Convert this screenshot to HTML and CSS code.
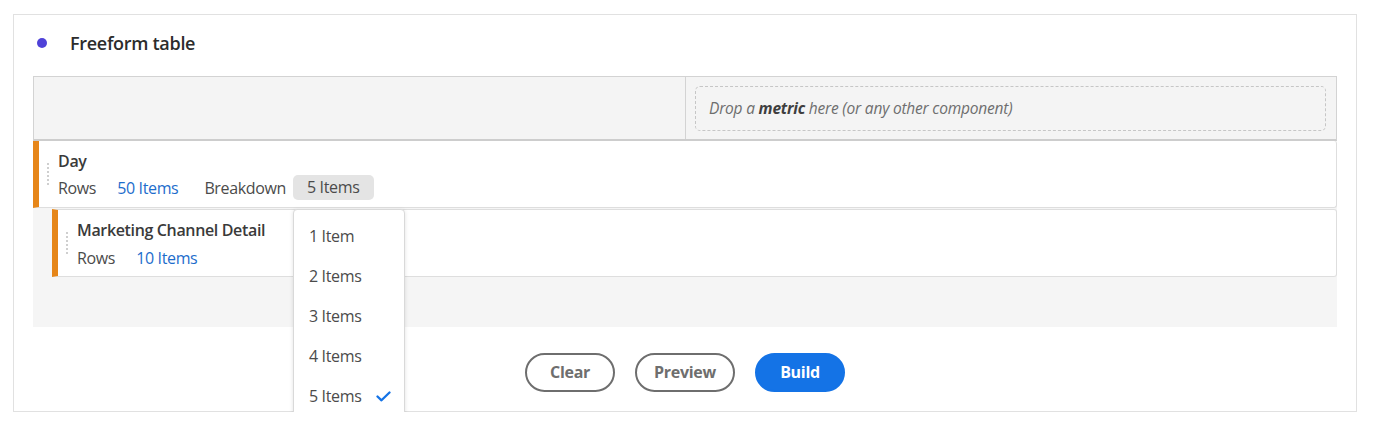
FILE: index.html
```html
<!DOCTYPE html>
<html lang="en">
<head>
<meta charset="utf-8">
<title>Freeform table</title>
<link rel="stylesheet" href="styles.css">
</head>
<body>
<div class="page">
  <section class="card">
    <div class="title-row">
      <span class="dot"></span>
      <h2 class="title">Freeform table</h2>
    </div>

    <div class="table">
      <div class="head">
        <div class="head-cell"></div>
        <div class="head-cell head-drop">
          <div class="dropzone">Drop a <b>metric</b> here (or any other component)</div>
        </div>
      </div>

      <div class="rows">
        <div class="row">
          <span class="grip"></span>
          <div class="row-body">
            <div class="row-name">Day</div>
            <div class="row-meta">
              <span class="lbl">Rows</span>
              <span class="link">50 Items</span>
              <span class="lbl lbl-bd">Breakdown</span>
              <span class="picker">
                <span class="pill">5 Items</span>
                <ul class="menu">
                  <li class="menu-item">1 Item</li>
                  <li class="menu-item">2 Items</li>
                  <li class="menu-item">3 Items</li>
                  <li class="menu-item">4 Items</li>
                  <li class="menu-item selected">5 Items
                    <svg class="check" width="15" height="11" viewBox="0 0 15 11"><path d="M1.5 5.5 L5.5 9.3 L13.5 1.5" fill="none" stroke="#1473e6" stroke-width="2.3" stroke-linecap="round" stroke-linejoin="round"/></svg>
                  </li>
                </ul>
              </span>
            </div>
          </div>
        </div>

        <div class="row row-sub">
          <span class="grip"></span>
          <div class="row-body">
            <div class="row-name">Marketing Channel Detail</div>
            <div class="row-meta">
              <span class="lbl">Rows</span>
              <span class="link">10 Items</span>
            </div>
          </div>
        </div>
      </div>
    </div>

    <div class="actions">
      <button class="btn btn-outline btn-clear">Clear</button>
      <button class="btn btn-outline btn-preview">Preview</button>
      <button class="btn btn-primary">Build</button>
    </div>
  </section>
</div>
</body>
</html>
```

FILE: styles.css
```css
* { box-sizing: border-box; }

html, body {
  margin: 0;
  padding: 0;
  background: #ffffff;
}

body {
  font-family: "Open Sans", "Noto Sans", sans-serif;
  font-size: 16px;
  letter-spacing: -0.35px;
  color: #4b4b4b;
}

.page {
  padding: 14px 0 0 13px;
}

.card {
  width: 1344px;
  border: 1px solid #e1e1e1;
  padding: 14px 19px 19px 19px;
  background: #fff;
}

.title-row {
  display: flex;
  align-items: center;
  height: 28px;
  margin-bottom: 19px;
  padding-left: 4px;
}

.dot {
  width: 10px;
  height: 10px;
  border-radius: 50%;
  background: #4f42d8;
  flex: none;
}

.title {
  margin: 0 0 0 23px;
  font-size: 18px;
  font-weight: 600;
  letter-spacing: -0.3px;
  color: #2c2c2c;
  line-height: 28px;
}

/* table */
.table {
  width: 1304px;
}

.head {
  display: grid;
  grid-template-columns: 1fr 1fr;
  background: #f4f4f4;
  border: 1px solid #d3d3d3;
  border-bottom: 2px solid #cdcdcd;
}

.head-cell {
  height: 62px;
}

.head-drop {
  border-left: 1px solid #d3d3d3;
  padding: 9px 10px 8px 9px;
}

.dropzone {
  height: 45px;
  border: 1px dashed #c6c6c6;
  border-radius: 5px;
  padding-left: 13px;
  padding-bottom: 1px;
  display: flex;
  align-items: center;
  font-style: italic;
  color: #6e6e6e;
  font-size: 15.5px;
  letter-spacing: -0.2px;
  white-space: pre;
}

.dropzone b {
  font-weight: 700;
  color: #3e3e3e;
}

.rows {
  background: #f5f5f5;
  padding-bottom: 50px;
}

.row {
  display: flex;
  background: #fff;
  border-left: 6px solid #e68619;
  border-right: 1px solid #dedede;
  border-bottom: 1px solid #dedede;
  border-top-right-radius: 3px;
  border-bottom-right-radius: 3px;
  padding: 9px 0 7px 8px;
}

.row-sub {
  margin-left: 19px;
  margin-top: 1px;
  border-top: 1px solid #dedede;
  padding-bottom: 6px;
}

.row-sub .row-meta {
  margin-top: 4px;
}

.grip {
  flex: none;
  width: 2px;
  height: 22px;
  margin-top: 13px;
  margin-right: 9px;
  background-image: linear-gradient(#cfcfcf 50%, transparent 50%);
  background-size: 2px 4px;
}

.row-name {
  font-weight: 600;
  color: #3a3a3a;
  line-height: 22px;
  height: 22px;
}

.row-meta {
  display: flex;
  align-items: center;
  margin-top: 3px;
  height: 25px;
}

.lbl {
  margin-right: 21px;
}

.lbl-bd {
  margin-right: 7px;
}

.link {
  color: #1d6dcc;
  margin-right: 26px;
}

.picker {
  position: relative;
  display: inline-block;
}

.pill {
  display: inline-block;
  height: 25px;
  line-height: 25px;
  padding: 0 15px 0 14px;
  background: #e4e4e4;
  border-radius: 5px;
  color: #4b4b4b;
}

.menu {
  position: absolute;
  left: 0;
  top: 34px;
  z-index: 5;
  width: 112px;
  margin: 0;
  padding: 6px 0 4px 0;
  list-style: none;
  background: #fff;
  border: 1px solid #d9d9d9;
  border-radius: 4px;
  box-shadow: 0 1px 4px rgba(0, 0, 0, 0.12);
}

.menu-item {
  height: 40px;
  display: flex;
  align-items: center;
  padding-left: 15px;
  color: #4b4b4b;
}

.check {
  margin-left: auto;
  margin-right: 13px;
}

/* actions */
.actions {
  display: flex;
  justify-content: center;
  gap: 20px;
  margin-top: 26px;
}

.btn {
  height: 39px;
  width: 90px;
  border-radius: 20px;
  font-family: inherit;
  font-size: 16px;
  letter-spacing: -0.3px;
  font-weight: 700;
  padding: 0 0 1px 0;
  cursor: pointer;
}

.btn-preview {
  width: 100px;
}

.btn-outline {
  background: #fff;
  border: 2px solid #6e6e6e;
  color: #6e6e6e;
}

.btn-primary {
  background: #1473e6;
  border: 2px solid #1473e6;
  color: #fff;
}
```
